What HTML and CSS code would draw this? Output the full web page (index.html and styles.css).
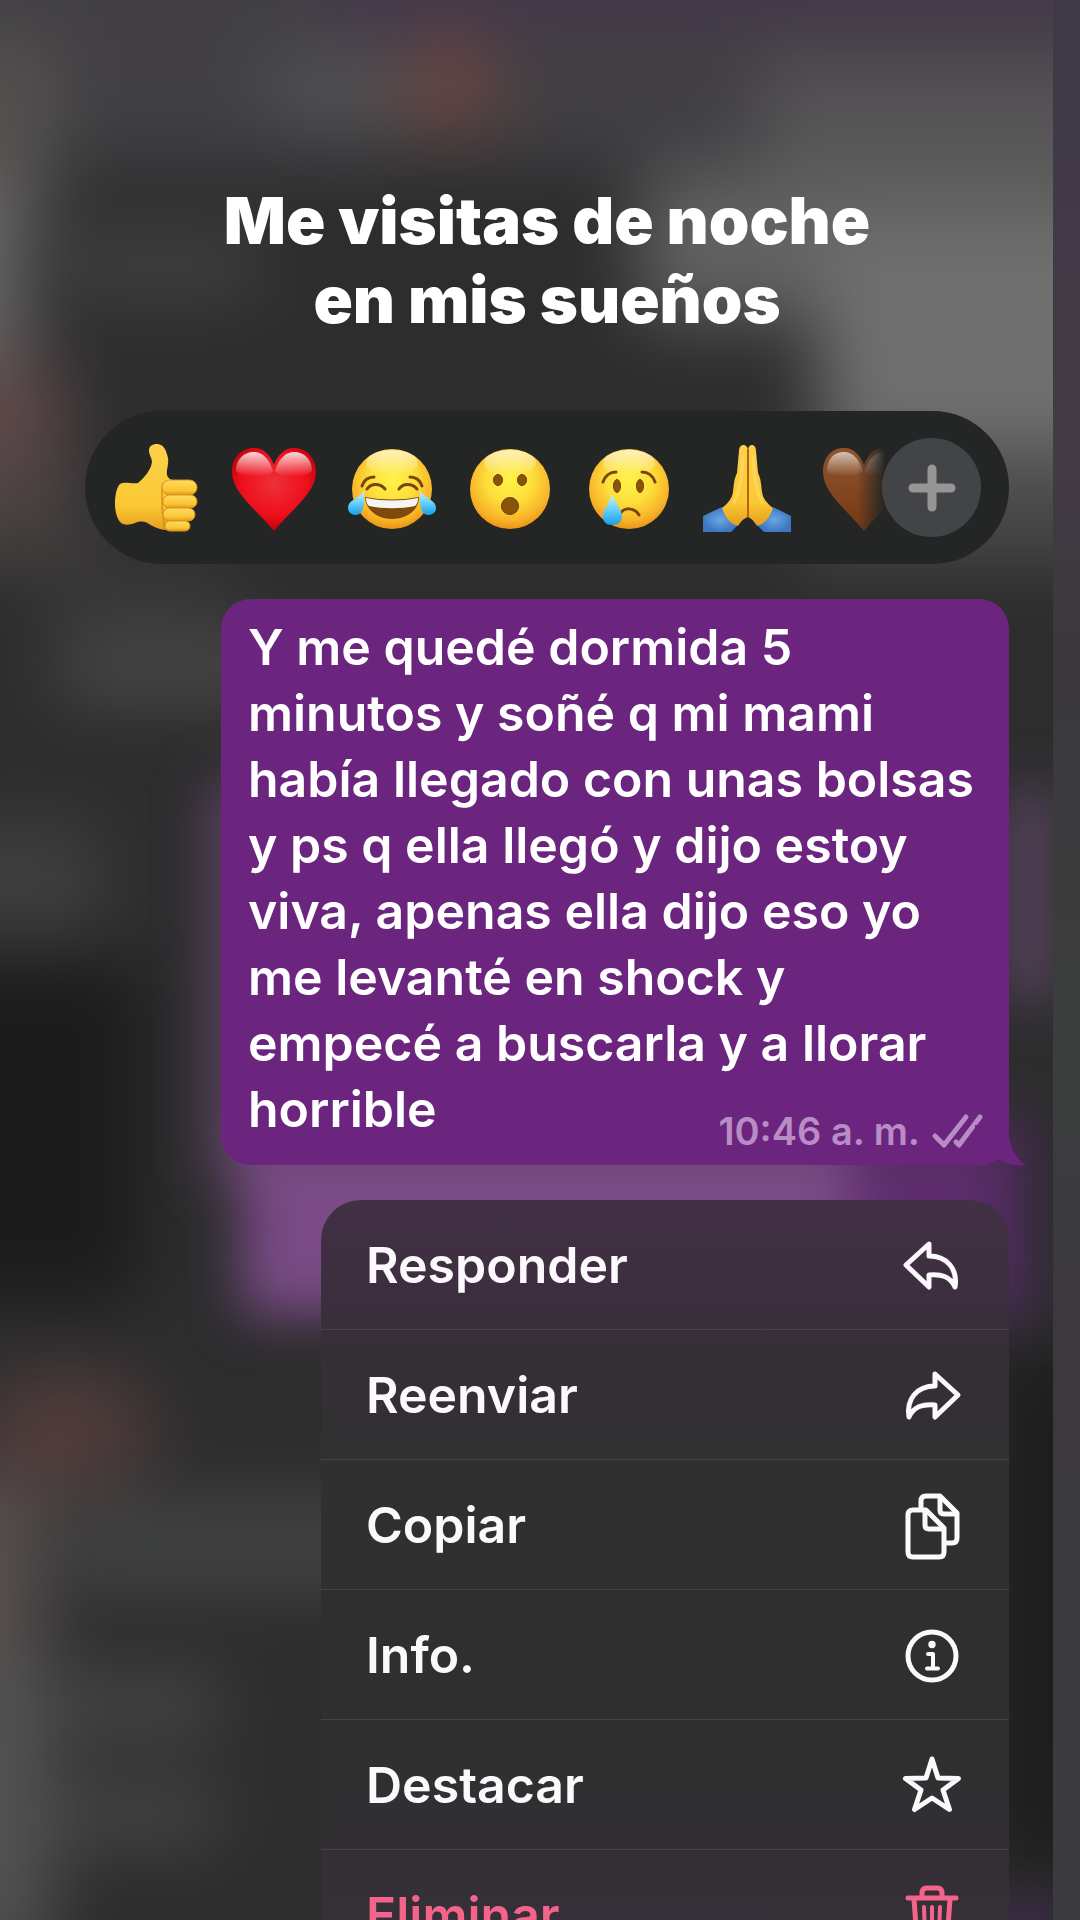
FILE: index.html
```html
<!DOCTYPE html>
<html lang="es">
<head>
  <meta charset="UTF-8" />
  <meta name="viewport" content="width=device-width, initial-scale=1.0" />
  <title>Me visitas de noche en mis sueños</title>
  <link rel="stylesheet" href="styles.css">
</head>
<body>
  <main class="chat">
    <!-- blurred conversation behind the menu -->
    <svg class="backdrop" viewBox="0 0 1053 1920" preserveAspectRatio="none" aria-hidden="true">
      <defs>
        <filter id="soft" x="-20%" y="-20%" width="140%" height="140%" color-interpolation-filters="sRGB"><feGaussianBlur stdDeviation="36" /></filter>
        <filter id="glow" x="-20%" y="-30%" width="140%" height="160%" color-interpolation-filters="sRGB"><feGaussianBlur stdDeviation="26" /></filter>
      </defs>
      <rect width="1053" height="1920" fill="#2d2d2e" />
      <g filter="url(#soft)">
        <rect x="-100" y="-100" width="1260" height="2140" fill="#2d2d2e" />
        <rect x="-80" y="-80" width="1220" height="240" fill="#424044" />
        <rect x="320" y="-80" width="800" height="110" fill="#44384b" />
        <rect x="-60" y="40" width="110" height="180" fill="#555350" />
        <ellipse cx="340" cy="90" rx="80" ry="44" fill="#505053" />
        <ellipse cx="450" cy="85" rx="50" ry="52" fill="#6a4440" />
        <rect x="60" y="230" width="200" height="70" fill="#404041" />
        <rect x="760" y="60" width="360" height="150" fill="#565456" />
        <rect x="640" y="170" width="480" height="150" fill="#626262" />
        <rect x="820" y="230" width="320" height="230" fill="#707070" />
        <rect x="800" y="450" width="330" height="110" fill="#4a4a4a" />
        <rect x="-100" y="180" width="125" height="190" fill="#6a6868" />
        <rect x="-100" y="360" width="165" height="110" fill="#5e4849" />
        <rect x="-100" y="470" width="180" height="90" fill="#494241" />
        <rect x="50" y="560" width="180" height="60" fill="#3a3938" />
        <rect x="60" y="640" width="220" height="56" fill="#4e4e4f" />
        <rect x="-100" y="820" width="200" height="120" fill="#3e3e3e" />
        <rect x="-100" y="960" width="240" height="340" fill="#1b1b1b" />
        <ellipse cx="65" cy="1430" rx="90" ry="60" fill="#523c3b" />
        <rect x="-100" y="1480" width="140" height="190" fill="#5a5150" />
        <rect x="60" y="1500" width="400" height="90" fill="#424343" />
        <rect x="60" y="1680" width="160" height="50" fill="#4c4c4c" />
        <rect x="-100" y="1660" width="150" height="300" fill="#535353" />
        <rect x="40" y="1790" width="180" height="50" fill="#4a4a4c" />
        <rect x="990" y="1350" width="160" height="520" fill="#1d1d1d" />
      </g>
      <g filter="url(#glow)">
        <rect x="210" y="780" width="60" height="400" fill="#5e4364" />
        <rect x="1000" y="790" width="60" height="210" fill="#54425a" />
        <rect x="980" y="1120" width="50" height="200" fill="#4a2a58" />
        <rect x="242" y="1130" width="640" height="185" fill="#7a4b86" />
        <rect x="850" y="1130" width="145" height="185" fill="#5e2d6d" />
        <rect x="990" y="1910" width="60" height="60" fill="#4a2a5c" />
      </g>
    </svg>

    <h1 class="title">Me visitas de noche<br>en mis sueños</h1>

    <!-- shared gradients for the reaction glyphs -->
    <svg class="defs" width="0" height="0" aria-hidden="true">
      <defs>
        <radialGradient id="face" cx="50%" cy="38%" r="64%">
          <stop offset="0" stop-color="#fff34a" />
          <stop offset="0.45" stop-color="#fddf3b" />
          <stop offset="0.8" stop-color="#f9b429" />
          <stop offset="1" stop-color="#e88e12" />
        </radialGradient>
        <linearGradient id="shine" x1="0" y1="0" x2="0" y2="1">
          <stop offset="0" stop-color="#fff" stop-opacity="0.85" />
          <stop offset="1" stop-color="#fff" stop-opacity="0" />
        </linearGradient>
        <linearGradient id="skin" x1="0" y1="0" x2="0" y2="1">
          <stop offset="0" stop-color="#fdd04a" />
          <stop offset="0.7" stop-color="#fbc934" />
          <stop offset="1" stop-color="#e59d1c" />
        </linearGradient>
        <linearGradient id="finger" x1="0" y1="0" x2="0" y2="1">
          <stop offset="0" stop-color="#ffdc63" />
          <stop offset="0.7" stop-color="#fbc531" />
          <stop offset="1" stop-color="#e09517" />
        </linearGradient>
        <radialGradient id="red" cx="50%" cy="42%" r="60%">
          <stop offset="0" stop-color="#ee3038" />
          <stop offset="0.65" stop-color="#ee0f1c" />
          <stop offset="1" stop-color="#b80008" />
        </radialGradient>
        <linearGradient id="brown" x1="0" y1="0" x2="0" y2="1">
          <stop offset="0" stop-color="#8f5430" />
          <stop offset="1" stop-color="#763a12" />
        </linearGradient>
        <linearGradient id="drop" x1="0" y1="0" x2="0" y2="1">
          <stop offset="0" stop-color="#c9f2ff" />
          <stop offset="0.6" stop-color="#54c8f8" />
          <stop offset="1" stop-color="#1b9de6" />
        </linearGradient>
        <radialGradient id="sleeve">
          <stop offset="0" stop-color="#6ba7e2" />
          <stop offset="1" stop-color="#3c78c0" />
        </radialGradient>
      </defs>
    </svg>

    <div class="reactions">
      <button class="reaction" type="button" aria-label="Me gusta">
        <svg viewBox="0 0 90 90">
          <path fill="url(#skin)" d="M38 8C38 3 41 1 46 1c6 0 9 5 11 14 1 7-2 12-1 17 1 4 5 5 9 6l-6 44 10 6C54 88 46 86 38 81c-5-3-8-3-14-1-5 2-9 2-12 1C7 79 4 70 4 61c0-10 2-17 5-20 4-3 11 0 18-1 6-5 13-13 14-21 0-4-3-7-3-11z" />
          <path fill="none" stroke="#d28a19" stroke-width="2" opacity="0.7" d="M52 40c-2 14-1 30 2 46" />
          <rect x="51" y="37" width="35" height="15" rx="7.5" fill="url(#finger)" stroke="#d99520" />
          <rect x="52" y="52" width="34" height="13" rx="6.5" fill="url(#finger)" stroke="#d99520" />
          <rect x="52" y="65" width="32" height="13" rx="6.5" fill="url(#finger)" stroke="#d99520" />
          <rect x="54" y="78" width="25" height="10" rx="5" fill="url(#finger)" stroke="#d99520" />
        </svg>
      </button>
      <button class="reaction" type="button" aria-label="Corazón rojo">
        <svg viewBox="0 0 90 90">
          <path fill="url(#red)" d="M45 22C41 11 34 5 25 5 12 5 3 15 3 29c0 21 25 38 42 59 17-21 42-38 42-59C87 15 78 5 65 5c-9 0-16 6-20 17z" />
          <path fill="url(#shine)" d="M44 28C40 15 33 9 25 9 14 9 7 17 7 28c6 7 32 7 37 0zM46 28C50 15 57 9 65 9c11 0 18 8 18 19-6 7-32 7-37 0z" />
        </svg>
      </button>
      <button class="reaction" type="button" aria-label="Llorar de risa">
        <svg viewBox="0 0 90 90">
          <circle cx="45" cy="46" r="40" fill="url(#face)" />
          <ellipse cx="45" cy="20" rx="26" ry="13" fill="url(#shine)" opacity="0.8" />
          <g fill="none" stroke="#7a4509" stroke-width="3" stroke-linecap="round">
            <path d="M15 43c2-6 6-9 12-9M75 43c-2-6-6-9-12-9" />
            <path d="M20 46c4-6 13-6 18 0M52 46c4-6 13-6 18 0" />
          </g>
          <path fill="#7d4a0c" d="M18 54q27 5 54 0c0 13-12 22-27 22S19 67 18 54z" />
          <path fill="#f5f4f3" d="M19 55q26 5 52 0c0 4-1 6-3 8-14 3-32 3-46 0-2-2-3-4-3-8z" />
          <path fill="url(#drop)" d="M17 48c1 10 0 24-8 24-5 0-8-3-8-7 0-8 10-9 16-17zM73 48c-1 10 0 24 8 24 5 0 8-3 8-7 0-8-10-9-16-17z" />
        </svg>
      </button>
      <button class="reaction" type="button" aria-label="Sorpresa">
        <svg viewBox="0 0 90 90">
          <circle cx="45" cy="46" r="40" fill="url(#face)" />
          <ellipse cx="45" cy="20" rx="26" ry="13" fill="url(#shine)" opacity="0.8" />
          <g fill="#895309" stroke="#6f3f06">
            <ellipse cx="33" cy="37" rx="4.5" ry="5.5" />
            <ellipse cx="57" cy="37" rx="4.5" ry="5.5" />
            <circle cx="45" cy="63" r="8.5" />
          </g>
        </svg>
      </button>
      <button class="reaction" type="button" aria-label="Tristeza">
        <svg viewBox="0 0 90 90">
          <circle cx="46" cy="46" r="40" fill="url(#face)" />
          <ellipse cx="46" cy="20" rx="26" ry="13" fill="url(#shine)" opacity="0.8" />
          <g fill="#895309" stroke="#6f3f06">
            <ellipse cx="34" cy="43" rx="3.5" ry="6.5" />
            <ellipse cx="57" cy="43" rx="3.5" ry="6.5" />
          </g>
          <path fill="none" stroke="#7a4509" stroke-width="3" stroke-linecap="round" d="M20 39c2-6 7-10 13-10M72 39c-2-6-7-10-13-10M37 71c4-7 14-7 19 1" />
          <path fill="url(#drop)" d="M29 51c3 9 10 15 10 22 0 6-4 9-10 9s-9-3-9-9c0-7 7-13 9-22z" />
        </svg>
      </button>
      <button class="reaction" type="button" aria-label="Manos juntas">
        <svg viewBox="0 0 90 90">
          <path fill="#0d2452" d="M34 78l6 4-7 7h-6zM60 78l-6 4 7 7h6z" />
          <path fill="url(#sleeve)" d="M2 73l19-9 15 19-6 6H2z" />
          <path fill="url(#sleeve)" d="M90 73l-18-9-15 19 6 6h27z" />
          <path fill="url(#skin)" d="M38 8c0-8 9-8 9 0v66c-4 1-7 4-10 9-7-1-13-9-16-18 6-5 10-9 11-16 1-8 1-13 4-19z" />
          <path fill="url(#skin)" d="M55 8c0-8-8-8-8 0v66c3 1 6 4 9 9 7-1 13-9 16-18-6-5-10-9-11-16-1-8-1-13-4-19z" />
          <path stroke="#b3660e" stroke-width="2" d="M47 6v68" />
          <path fill="none" stroke="#ffe07a" stroke-width="3" stroke-linecap="round" opacity="0.5" d="M42 14c-1 16-2 32-9 46M52 14c1 16 2 32 9 46" />
        </svg>
      </button>
      <button class="reaction reaction-fade" type="button" aria-label="Corazón café">
        <svg viewBox="0 0 90 90">
          <path fill="url(#brown)" d="M45 22C41 11 34 5 25 5 12 5 4 15 4 29c0 21 24 38 41 59 17-21 42-38 42-59C87 15 78 5 65 5c-9 0-16 6-20 17z" />
          <path fill="url(#shine)" opacity="0.75" d="M44 28C40 15 33 9 25 9 14 9 8 17 8 28c6 7 31 7 36 0zM46 28C50 15 57 9 65 9c11 0 18 8 18 19-6 7-32 7-37 0z" />
        </svg>
      </button>
      <button class="more" type="button" aria-label="Más reacciones">
        <svg viewBox="0 0 48 48"><path d="M24 5v38M5 24h38" /></svg>
      </button>
    </div>

    <article class="bubble">
      <p class="message">
        Y me quedé dormida 5 minutos y soñé q mi mami había llegado con unas bolsas y ps q ella llegó y dijo estoy viva, apenas ella dijo eso yo me levanté en shock y empecé a buscarla y a llorar horrible
        <span class="meta">
          <time datetime="10:46">10:46 a. m.</time>
          <svg class="ticks" viewBox="0 0 50 34"><path d="M3 22l9 9L34 3M24 28l3 3L48 3" /></svg>
        </span>
      </p>
      <svg class="tail" viewBox="0 0 50 40" aria-hidden="true">
        <path d="M34 0v8c0 12 6 24 16 32-10 1-19 0-27-6-5 4-11 6-19 6H0V0z" />
      </svg>
    </article>

    <nav class="menu">
      <button class="item" type="button">Responder
        <svg viewBox="0 0 60 60"><path d="M28 9L5 30l23 22V40c12-1 21 1 26 12C57 34 46 21 28 21z" /></svg>
      </button>
      <button class="item" type="button">Reenviar
        <svg viewBox="0 0 60 60"><path d="M34 9l23 21-23 22V40C22 39 13 41 8 52 5 34 16 21 34 21z" /></svg>
      </button>
      <button class="item" type="button">Copiar
        <svg viewBox="0 0 60 60">
          <path d="M12 15h13l18 18v24q0 5-5 5H12q-5 0-5-5V20q0-5 5-5z" />
          <path d="M24 16v14q0 4 4 4h14" />
          <path d="M20 12V6q0-5 5-5h14l17 17v25q0 5-5 5h-5" />
          <path d="M39 2v13q0 4 4 4h12" />
        </svg>
      </button>
      <button class="item" type="button">Info.
        <svg viewBox="0 0 60 60">
          <circle cx="31" cy="31" r="24" />
          <circle class="dot" cx="31" cy="19.5" r="3.7" />
          <path class="thin" d="M27 29h5v14M26 43.500h11" />
        </svg>
      </button>
      <button class="item" type="button">Destacar
        <svg viewBox="0 0 60 60"><path d="M31 4l6 19 20.500.5L42 35l6.500 19.500L31 43 13.500 54.500 20 35 4.500 23.500 25 23z" /></svg>
      </button>
      <button class="item item-danger" type="button">Eliminar
        <svg viewBox="0 0 60 60">
          <path d="M7 13h48M21 12V8q0-5 5-5h10q5 0 5 5v4M13 14l3 41q0 5 5 5h20q5 0 5-5l3-41" />
          <path class="thin" d="M23 22l1 28M31 22v28M39 22l-1 28" />
        </svg>
      </button>
    </nav>
  </main>
  <div class="edge"></div>
</body>
</html>
```
FILE: styles.css
```css
:root {
  --bubble: #6b257f;
  --pill: #242625;
  --text: #fbf9fc;
  --muted: #b88cc4;
  --danger: #f4648a;
}

* { box-sizing: border-box; }
body {
  margin: 0;
  height: 100vh;
  overflow: hidden;
  display: flex;
  background: #3b383c;
  color: var(--text);
  font-family: Inter, "Liberation Sans", sans-serif;
}
button {
  margin: 0;
  padding: 0;
  border: 0;
  background: none;
  color: inherit;
  font: inherit;
  cursor: pointer;
}
svg { display: block; flex: none; overflow: visible; }
.defs { position: absolute; }

.chat {
  position: relative;
  overflow: hidden;
  flex: 1;
  display: flex;
  flex-direction: column;
  align-items: flex-end;
  padding: 181px 44px 0 85px;
}
.edge {
  flex: none;
  width: 27px;
  background: linear-gradient(#3f3946, #443a46 22%, #3a383b 35%, #3c3e3e 57%, #3b393d 66%, #3b3a3e);
}
.backdrop {
  position: absolute;
  inset: 0;
  width: 100%;
  height: 100%;
  z-index: -1;
  overflow: hidden;
}

.title {
  width: 100%;
  margin: 0 0 72px;
  font-size: 65px;
  line-height: 79px;
  font-weight: 900;
  text-align: center;
  color: #fff;
}

/* Reaction bar */
.reactions {
  width: 100%;
  display: flex;
  align-items: center;
  gap: 28px;
  padding: 27px 27px 27px 26px;
  margin-bottom: 35px;
  border-radius: 77px;
  background: var(--pill);
}
.reaction svg { width: 90px; height: 90px; }
.reaction-fade {
  -webkit-mask-image: linear-gradient(to right, #000 38px, transparent 66px);
  mask-image: linear-gradient(to right, #000 38px, transparent 66px);
}
.more {
  flex: none;
  width: 99px;
  height: 99px;
  margin-left: -55px;
  display: grid;
  place-items: center;
  border-radius: 50%;
  background: #434447;
}
.more svg {
  width: 48px;
  height: 48px;
  stroke: #979496;
  stroke-width: 9;
  stroke-linecap: round;
}

/* Message */
.bubble {
  position: relative;
  align-self: stretch;
  margin: 0 0 35px 136px;
  padding: 15px 20px 23px 27px;
  border-radius: 30px;
  background: var(--bubble);
}
.message {
  margin: 0;
  font-size: 50px;
  line-height: 66px;
  font-weight: 600;
  color: #fff;
}
.meta {
  float: right;
  display: flex;
  align-items: center;
  gap: 12px;
  margin: 33px 7px -12px 0;
  font-size: 38px;
  line-height: 44px;
  color: var(--muted);
}
.ticks {
  width: 50px;
  height: 34px;
  fill: none;
  stroke: var(--muted);
  stroke-width: 5;
  stroke-linecap: round;
  stroke-linejoin: round;
}
.tail {
  position: absolute;
  right: -16px;
  bottom: 0;
  width: 50px;
  height: 40px;
  fill: var(--bubble);
}

/* Context menu */
.menu {
  flex: none;
  width: 688px;
  max-width: 100%;
  border-radius: 40px;
  overflow: hidden;
  background: linear-gradient(#423044, #3c2e3f 12%, #352f36 20%, #303031 34%, #2f2f2f 60%, #302f31 78%, #3a303c);
}
.item {
  width: 100%;
  height: 130px;
  display: flex;
  align-items: center;
  justify-content: space-between;
  padding: 0 48px 0 45px;
  border-bottom: 1px solid #464347;
  font-size: 50px;
  font-weight: 600;
}
.item svg {
  width: 60px;
  height: 60px;
  fill: none;
  stroke: currentColor;
  stroke-width: 5;
  stroke-linecap: round;
  stroke-linejoin: round;
}
.item .thin { stroke-width: 4; }
.item .dot { fill: currentColor; stroke: none; }
.item-danger { color: var(--danger); border-bottom: 0; }
```
